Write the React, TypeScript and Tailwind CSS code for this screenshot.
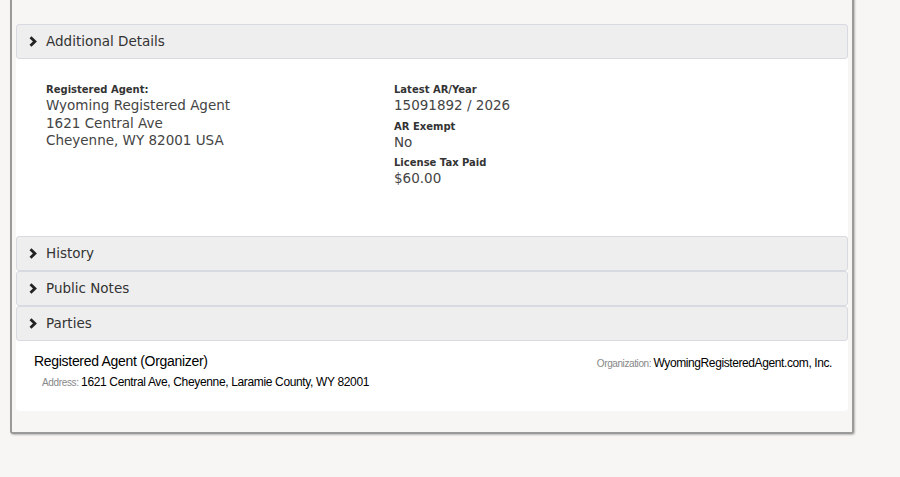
const verdana = "font-['DejaVu_Sans',Verdana,sans-serif]";
const arial = "font-['Liberation_Sans',Arial,sans-serif]";

function Chevron() {
  return (
    <svg width="8" height="11" viewBox="0 0 8 11" className="shrink-0">
      <path d="M1.5 1.3 L5.9 5.5 L1.5 9.7" fill="none" stroke="#222" strokeWidth="2.8" strokeLinejoin="miter" />
    </svg>
  );
}

function SectionHeader({ title }: { title: string }) {
  return (
    <div className="flex h-[35px] items-center gap-[9px] rounded-[3px] border border-[#d7dbe1] bg-[#eeeeee] pl-[12px] text-[#333]">
      <Chevron />
      <span className={`${verdana} text-[13.5px]`}>{title}</span>
    </div>
  );
}

function Field({ label, children }: { label: string; children: React.ReactNode }) {
  return (
    <div className="mb-[5px]">
      <div className={`${verdana} text-[10px] font-bold leading-[13px] text-[#333]`}>{label}</div>
      <div className={`${verdana} mt-[1px] text-[13.5px] leading-[17.5px] text-[#444]`}>{children}</div>
    </div>
  );
}

export default function App() {
  return (
    <div className="h-[477px] w-[900px] overflow-hidden bg-[#f7f6f4]">
      {/* outer panel, its top runs off the page */}
      <div className="ml-[10px] mt-[-10px] w-[844px] rounded-b-[3px] border-x-2 border-b-2 border-[#9a9a9a] bg-[#f7f6f4] px-[4px] pb-[21px] pt-[34px] shadow-[1px_1px_2px_rgba(0,0,0,0.25)]">
        <div className="w-[832px] rounded-[4px] bg-white">
          <SectionHeader title="Additional Details" />

          <div className="grid h-[177px] grid-cols-[348px_1fr] px-[30px] pt-[24px]">
            <Field label="Registered Agent:">
              Wyoming Registered Agent
              <br />
              1621 Central Ave
              <br />
              Cheyenne, WY 82001 USA
            </Field>
            <div>
              <Field label="Latest AR/Year">15091892 / 2026</Field>
              <Field label="AR Exempt">No</Field>
              <Field label="License Tax Paid">$60.00</Field>
            </div>
          </div>

          <SectionHeader title="History" />
          <SectionHeader title="Public Notes" />
          <SectionHeader title="Parties" />

          <div className={`${arial} flex h-[70px] justify-between pl-[18px] pr-[16px] pt-[11px] text-black`}>
            <div>
              <div className="text-[14px] leading-[18px] tracking-[-0.3px]">Registered Agent (Organizer)</div>
              <div className="mt-[4px] pl-[8px] text-[12px] leading-[16px] tracking-[-0.35px]">
                <span className="text-[10px] text-[#888]">Address: </span>
                1621 Central Ave, Cheyenne, Laramie County, WY 82001
              </div>
            </div>
            <div className="pt-[3px] text-[12px] leading-[16px] tracking-[-0.4px]">
              <span className="text-[10px] text-[#888]">Organization: </span>
              WyomingRegisteredAgent.com, Inc.
            </div>
          </div>
        </div>
      </div>
    </div>
  );
}
